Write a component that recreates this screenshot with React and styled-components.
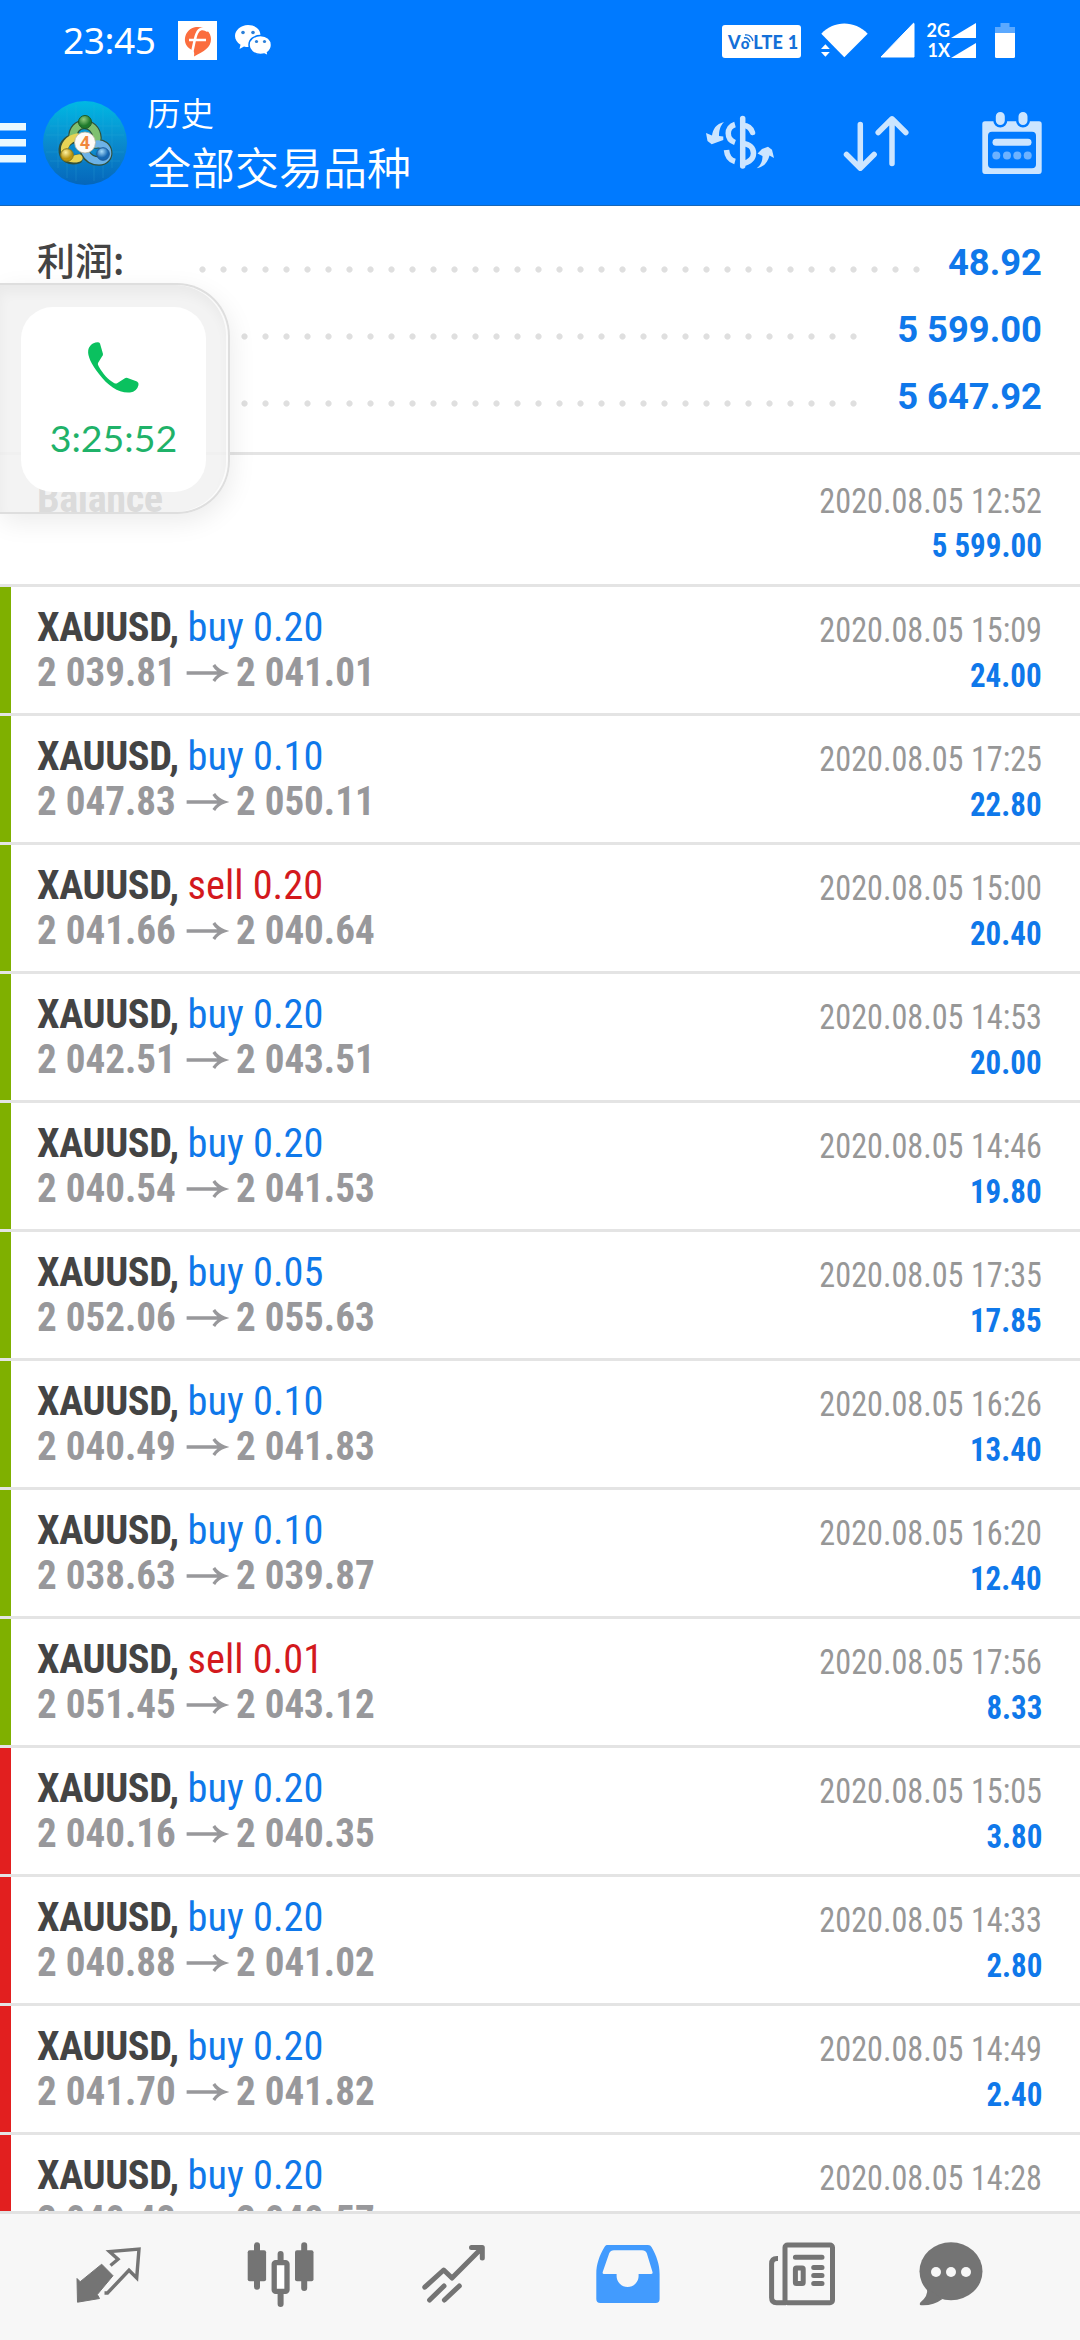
import React from 'react';
import styled, {createGlobalStyle} from 'styled-components';

const CONDENSED = "'Roboto Condensed', Roboto, 'Noto Sans CJK SC', sans-serif";
const CJK = "'Noto Sans CJK SC', sans-serif";

const DEALS = [
    {type: 'buy', volume: '0.20', from: '2 039.81', to: '2 041.01', date: '2020.08.05 15:09', profit: '24.00'},
    {type: 'buy', volume: '0.10', from: '2 047.83', to: '2 050.11', date: '2020.08.05 17:25', profit: '22.80'},
    {type: 'sell', volume: '0.20', from: '2 041.66', to: '2 040.64', date: '2020.08.05 15:00', profit: '20.40'},
    {type: 'buy', volume: '0.20', from: '2 042.51', to: '2 043.51', date: '2020.08.05 14:53', profit: '20.00'},
    {type: 'buy', volume: '0.20', from: '2 040.54', to: '2 041.53', date: '2020.08.05 14:46', profit: '19.80'},
    {type: 'buy', volume: '0.05', from: '2 052.06', to: '2 055.63', date: '2020.08.05 17:35', profit: '17.85'},
    {type: 'buy', volume: '0.10', from: '2 040.49', to: '2 041.83', date: '2020.08.05 16:26', profit: '13.40'},
    {type: 'buy', volume: '0.10', from: '2 038.63', to: '2 039.87', date: '2020.08.05 16:20', profit: '12.40'},
    {type: 'sell', volume: '0.01', from: '2 051.45', to: '2 043.12', date: '2020.08.05 17:56', profit: '8.33'},
    {type: 'buy', volume: '0.20', from: '2 040.16', to: '2 040.35', date: '2020.08.05 15:05', profit: '3.80', closedBy: 'sl'},
    {type: 'buy', volume: '0.20', from: '2 040.88', to: '2 041.02', date: '2020.08.05 14:33', profit: '2.80', closedBy: 'sl'},
    {type: 'buy', volume: '0.20', from: '2 041.70', to: '2 041.82', date: '2020.08.05 14:49', profit: '2.40', closedBy: 'sl'},
    {type: 'buy', volume: '0.20', from: '2 040.48', to: '2 040.57', date: '2020.08.05 14:28', profit: '1.80', closedBy: 'sl'},
];

const GlobalStyle = createGlobalStyle`
    body {
        margin: 0;
        background: #fff;
    }

    svg {
        display: block;
        flex: none;
        overflow: visible;
    }
`;

const Screen = styled.div`
    position: relative;
    display: flex;
    flex-direction: column;
    width: 1080px;
    height: 2340px;
    overflow: hidden;
    background: #fff;
    font-family: ${CONDENSED};
`;

const Header = styled.header`
    flex: none;
    box-sizing: border-box;
    height: 206px;
    border-bottom: 1px solid #1767b8;
    background: #007aff;
    color: #fff;
`;

const StatusBar = styled.div`
    display: flex;
    align-items: center;
    height: 80px;
    padding: 0 65px 0 63px;

    svg + svg {
        margin-left: 18px;
    }
`;

const Clock = styled.span`
    width: 115px;
    font: 400 37px/80px 'Noto Sans', sans-serif;
    letter-spacing: -0.4px;
`;

const StatusIcons = styled.div`
    display: flex;
    align-items: center;
    margin-left: auto;

    svg + svg {
        margin-left: 12px;
    }
`;

const Volte = styled.div`
    position: relative;
    display: flex;
    align-items: baseline;
    box-sizing: border-box;
    width: 79px;
    height: 33px;
    margin: 3px 20px 0 0;
    padding-left: 6px;
    border-radius: 3px;
    background: #fff;
    color: #1470d8;
    font: 900 18px/34px Lato, sans-serif;

    svg {
        position: absolute;
        top: 9px;
        left: 22px;
    }
`;

const VolteO = styled.span`
    font-size: 15px;
`;

const VolteText = styled.span`
    margin-left: 4px;
    letter-spacing: 0.3px;
    white-space: pre;
`;

const Networks = styled.div`
    display: grid;
    grid-template-columns: 26px 25px;
    row-gap: 5px;
    align-items: center;
    margin: 0 19px 0 10px;
    font: 700 18px/15px Lato, sans-serif;
`;

const NetworkName = styled.span`
    text-align: right;
    padding-right: 1px;
    line-height: 15px;
`;

const Toolbar = styled.div`
    display: flex;
    align-items: center;
    height: 125px;
    padding-right: 32px;

    svg + svg {
        margin-left: 16px;
    }
`;

const Titles = styled.div`
    flex: 1;
    padding: 0 0 4px 19px;
    font-family: ${CJK};
    font-weight: 350;
`;

const Caption = styled.div`
    font-size: 33.5px;
    line-height: 50px;
`;

const Title = styled.div`
    font-size: 44px;
    line-height: 58px;
`;

const Actions = styled.div`
    display: flex;

    svg + svg {
        margin-left: 64px;
    }
`;

const Summary = styled.section`
    flex: none;
    box-sizing: border-box;
    height: 249px;
    padding: 23px 38px 0 37px;
    border-bottom: 3px solid #e4e4e4;
`;

const SummaryRow = styled.div`
    display: flex;
    align-items: center;
    height: 67px;
`;

const SummaryLabel = styled.span`
    width: ${({$width}) => $width}px;
    padding-bottom: 7px;
    color: #444;
    font: 500 38px/60px ${CJK};
`;

const Dots = styled.span`
    width: ${({$count}) => $count * 21}px;
    height: 7px;
    margin-top: 14px;
    background: radial-gradient(circle, #dfdfdf 2.6px, transparent 3.6px) 0 0 / 21px 7px repeat-x;
`;

const SummaryValue = styled.span`
    margin-left: auto;
    color: #0f78ea;
    font: 700 36.4px/67px Roboto, sans-serif;
`;

const List = styled.main`
    flex: 1;
    min-height: 0;
    overflow: hidden;
`;

const Row = styled.div`
    display: flex;
    height: 126px;
    border-bottom: 3px solid #e4e4e4;
`;

const BalanceRow = styled(Row)`
    box-sizing: border-box;
    height: 132px;
    padding-top: 3px;
`;

const Mark = styled.i`
    width: 11px;
    background: ${({$type}) => ($type === 'sl' ? '#e21f1f' : $type ? '#7fb000' : 'transparent')};
`;

const RowBody = styled.div`
    flex: 1;
    padding: 18px 38px 0 26px;
`;

const Line = styled.div`
    display: flex;
    justify-content: space-between;
    align-items: baseline;
    height: 45px;
    font-size: 41px;
    line-height: 45px;
    white-space: pre;
`;

const TotalLine = styled(Line)`
    justify-content: flex-end;
    padding-top: 1px;
`;

const Instrument = styled.span`
    transform: scaleX(0.984);
    transform-origin: left;
`;

const Symbol = styled.b`
    color: #444;
    letter-spacing: -0.4px;
`;

const Operation = styled.span`
    color: ${({$type}) => ($type === 'sell' ? '#d3191d' : '#0f78ea')};
`;

const Prices = styled.b`
    display: flex;
    align-items: center;
    gap: 11px;
    color: #98989b;
    transform: scaleX(0.953);
    transform-origin: left;
`;

const DealDate = styled.span`
    padding-top: 1px;
    color: #979797;
    font-size: 35px;
    transform: translateY(1px) scaleX(0.92);
    transform-origin: right;
`;

const Profit = styled.b`
    color: #0f78ea;
    font-size: 34px;
    transform: translateY(1px) scaleX(0.912);
    transform-origin: right;
`;

const TabBar = styled.nav`
    flex: none;
    display: flex;
    box-sizing: border-box;
    height: 129px;
    padding: 0 0 6px 21px;
    border-top: 3px solid #e2e2e2;
    background: #f7f7f7;
`;

const Tab = styled.div`
    display: flex;
    align-items: center;
    justify-content: center;
    width: ${({$last}) => ($last ? 130 : 173)}px;
    color: ${({$active}) => ($active ? '#429bfe' : '#747474')};
`;

const CallBubble = styled.aside`
    position: absolute;
    top: 283px;
    left: 0;
    box-sizing: border-box;
    width: 230px;
    height: 231px;
    padding: 22px 0 0 21px;
    border: 2px solid #dedede;
    border-left: 0;
    border-radius: 0 53px 53px 0;
    background: rgba(241, 241, 241, 0.87);
    background-clip: padding-box;
    box-shadow: 2px 8px 26px rgba(0, 0, 0, 0.08), inset -2px 0 0 rgba(255, 255, 255, 0.7),
        inset 0 8px 12px rgba(0, 0, 0, 0.04);
`;

const CallCard = styled.div`
    display: flex;
    flex-direction: column;
    align-items: center;
    box-sizing: border-box;
    width: 185px;
    height: 185px;
    padding-top: 35px;
    border-radius: 32px;
    background: #fff;
    color: #0ac15f;
`;

const CallTime = styled.span`
    margin-top: 19px;
    color: #1fb269;
    font: 400 37.5px/52px Lato, sans-serif;
`;

const Stroke = ({width = 5, children}) => (
    <g fill="none" stroke="currentColor" strokeWidth={width} strokeLinecap="round" strokeLinejoin="round">
        {children}
    </g>
);

const BrokerIcon = () => (
    <svg width="39" height="39" viewBox="0 0 39 39">
        <path d="M0 0h39v39H0z" fill="#fff" />
        <path d="M16 35.500c.5-4 .5-5-3-7C3 23 6 8 18 6c9-1 15 5 15 12 0 9-7 12-17 17.500z" fill="#fb6d3e" />
        <path d="M14 32c2-9 3-16 5-20 2-4.500 6-5.500 11-2M11 19h17" fill="none" stroke="#fff" strokeWidth="2.6" />
    </svg>
);

const WechatIcon = () => (
    <svg width="37" height="31" viewBox="0 0 37 31">
        <path d="M13 0c7 0 12.500 4 12.500 10.500S20 22 13 22c-1.500 0-2.500-.2-4-.6L4.500 24l1-4.300C2 17.500 0 14.500 0 11 0 5 6 0 13 0z" fill="#fff" />
        <path d="M25.500 10.500c6.500 0 11 4 11 9.500 0 3-1.400 5.500-4 7.500l.8 3.500-4-2c-1.200.4-2.300.5-3.800.5-6.500 0-11.500-4-11.500-9.500s5-9.500 11.500-9.500z" fill="#fff" stroke="#007aff" strokeWidth="1.500" />
        <g fill="#2b7fd8">
            <circle cx="8" cy="7.500" r="1.800" />
            <circle cx="18" cy="7.500" r="1.800" />
            <circle cx="21.500" cy="16.500" r="1.600" />
            <circle cx="29.500" cy="16.500" r="1.600" />
        </g>
    </svg>
);

const WifiIcon = () => (
    <svg width="47" height="36" viewBox="0 0 47 36">
        <path d="M.3 11.700C13-2 33.500-2 46.700 11.700L23.300 35.300z" fill="#fff" />
        <path d="M0 27l4.400-4.700L8.800 27zM0 30h8.800l-4.400 4.700z" fill="#fff" />
    </svg>
);

const SignalIcon = () => (
    <svg width="35" height="36" viewBox="0 0 35 36">
        <path d="M33.500 1.200 1 35h33V1.500z" fill="#fff" stroke="#fff" strokeLinejoin="round" />
    </svg>
);

const SmallSignal = () => (
    <svg width="25" height="15" viewBox="0 0 25 15">
        <path d="M25 0v15H0z" fill="#fff" />
    </svg>
);

const BatteryIcon = () => (
    <svg width="20" height="35" viewBox="0 0 20 35">
        <path d="M5.500 0h9v4H20v8H0V4h5.500z" fill="#5ba9ff" />
        <path d="M0 10h20v23.500q0 1.500-1.500 1.500h-17Q0 35 0 33.500z" fill="#fff" />
    </svg>
);

const MenuIcon = () => (
    <svg width="26" height="40" viewBox="0 0 26 40">
        <path d="M0 0h26v7.500H0zM0 16h26v7.500H0zM0 32h26v7.500H0z" fill="#e9f8ff" />
    </svg>
);

const AppLogo = () => (
    <svg width="86" height="86" viewBox="0 0 86 86">
        <defs>
            <linearGradient id="sky" x1="0" y1="0" x2="0" y2="1">
                <stop offset="0" stopColor="#00b9e4" />
                <stop offset="0.5" stopColor="#0a8bcd" />
                <stop offset="1" stopColor="#0566bb" />
            </linearGradient>
            <radialGradient id="green" cx="0.4" cy="0.3">
                <stop offset="0" stopColor="#8fcb7c" />
                <stop offset="1" stopColor="#1f7a2c" />
            </radialGradient>
            <radialGradient id="yellow" cx="0.4" cy="0.3">
                <stop offset="0" stopColor="#fff2a0" />
                <stop offset="1" stopColor="#b99410" />
            </radialGradient>
            <radialGradient id="blue" cx="0.4" cy="0.3">
                <stop offset="0" stopColor="#a8dcfa" />
                <stop offset="1" stopColor="#1668b4" />
            </radialGradient>
        </defs>
        <circle cx="43" cy="43" r="42" fill="url(#sky)" />
        <path d="M16 18v50M25 8v70M34 5v76M52 5v76M61 8v70M70 18v50M8 26h70M4 35h78M4 52h78M8 61h70" stroke="#3bb5dd" strokeWidth="0.700" opacity="0.300" />
        <g fill="none" strokeLinecap="round">
            <path d="M31 38c-1-18 23-18 24 0M54 44c14-2 16 17 3 17-7 0-11-3-14-8M33 38c-18 4-14 26 3 21" stroke="#31503a" strokeWidth="9.500" />
            <path d="M31 38c-1-18 23-18 24 0l-1 6" stroke="#7fc06f" strokeWidth="7.200" />
            <path d="M54 44c14-2 16 17 3 17-7 0-11-3-14-9" stroke="#6db2e6" strokeWidth="7.200" />
            <path d="M35 37c-18 3-16 27 2 21" stroke="#e6d355" strokeWidth="7.200" />
        </g>
        <circle cx="43" cy="22" r="6.500" fill="url(#green)" stroke="#1b5926" />
        <circle cx="25" cy="55" r="6.300" fill="url(#yellow)" stroke="#8a7a1a" />
        <circle cx="61" cy="54" r="6.300" fill="url(#blue)" stroke="#1d5c9c" />
        <circle cx="43" cy="42.500" r="10.500" fill="#fdfbf7" stroke="#b7b39b" strokeWidth="0.800" />
        <text x="43" y="48.800" textAnchor="middle" fontFamily="Roboto" fontWeight="700" fontSize="18" fill="#f0873c">4</text>
    </svg>
);

const CurrencyIcon = () => (
    <svg width="72" height="72" viewBox="0 0 72 72" color="#cce5ff">
        <path d="M20 15C12 17 9 22 8 28.500L2 26l1.500 8 4.200 3.300L19.300 33v-3.500L15 29c0-5 1-10 5-14z" fill="currentColor" />
        <path d="M52.700 61.300C57 58 58.500 54 58.500 49l-5-2.500L58 42l6-2.300 4 3L70 51l-4.500-2.500C64 55 60 60 52.700 61.300z" fill="currentColor" />
        <g fill="none" stroke="currentColor" strokeWidth="5.500">
            <path d="M38.700 11.500v47.500" strokeLinecap="round" />
            <path d="M39 18.500c4.500 0 8 2.500 9.500 7" strokeLinecap="round" />
            <path d="M39 36.500c14 1 14 18 0 20" />
            <path d="M31 17.500c-9 2.500-9 15 0 18M22.500 43c.5 6 3 10 8.500 11.500" />
        </g>
    </svg>
);

const SortIcon = () => (
    <svg width="72" height="72" viewBox="0 0 72 72" color="#cce5ff">
        <Stroke width={5.5}>
            <path d="M20.300 17.500V61M6.500 47.500 20.300 61.200 34.100 47.500M52 56.500V12M38.200 25.500 52 11.800 65.800 25.500" />
        </Stroke>
    </svg>
);

const CalendarIcon = () => (
    <svg width="72" height="72" viewBox="0 0 72 72" color="#cce5ff">
        <path fillRule="evenodd" d="M9 14.300h54q2.700 0 2.700 2.700v47q0 3-2.700 3H9q-2.700 0-2.700-3V17q0-2.700 2.700-2.700zM16 24.700q-4 0-4 4v28.600q0 4 4 4h40q4 0 4-4V28.700q0-4-4-4z" fill="currentColor" />
        <path d="M24.300 9.500v4M47 9.500v4" stroke="#007aff" strokeWidth="14" strokeLinecap="round" />
        <path d="M24.300 9.500v4M47 9.500v4" stroke="currentColor" strokeWidth="9" strokeLinecap="round" />
        <path d="M20 35.300h32" stroke="currentColor" strokeWidth="7" strokeLinecap="round" />
        <g fill="#6db2ff">
            <circle cx="20.300" cy="48.500" r="4" />
            <circle cx="31" cy="48.500" r="4" />
            <circle cx="41.300" cy="48.500" r="4" />
            <circle cx="51.700" cy="48.500" r="4" />
        </g>
    </svg>
);

const PhoneIcon = () => (
    <svg width="51" height="51" viewBox="0 0 51 51">
        <path d="M7.500.6Q11-.5 12 1.500L15 12q0 1.500-1 2.500l-4 6.500q-.5 1 .5 3C15 32 20 37.500 26 41q2 1 3.500 0l7-4.500q1.500-1 3-.5l9.500 3.500q2 1 1.500 3.500-1.500 6.500-8.500 7.500C31 51.500 20 44 11 32 3 21.500-.5 14 .2 8.500.8 4.500 4 1.500 7.500.6z" fill="currentColor" />
    </svg>
);

const ArrowIcon = () => (
    <svg width="41" height="18" viewBox="0 0 41 18">
        <path d="M0 9h38M28.500 1Q32 6.500 39.500 9q-7.500 2.500-11 8" fill="none" stroke="currentColor" strokeWidth="3.400" />
    </svg>
);

const QuotesIcon = () => (
    <svg width="72" height="72" viewBox="0 0 72 72">
        <path d="M5 40.500 8.200 43.700 29.700 26.200 41 37.700 25.300 56.500 27.500 60.500 5.500 64.200z" fill="currentColor" stroke="currentColor" strokeLinejoin="round" />
        <path d="M38.500 27.500 46 21.300 37.500 13.500 67 11 64.700 40 57 32.300 35.500 55H32.500" fill="none" stroke="currentColor" strokeWidth="3.400" />
    </svg>
);

const ChartIcon = () => (
    <svg width="72" height="72" viewBox="0 0 72 72">
        <Stroke width={6}>
            <path d="M12 7.300v41.400M59.200 7.300v42.700M35.600 16v8M35.600 54v12" />
        </Stroke>
        <rect x="2.700" y="12.300" width="18.400" height="31" rx="2" fill="currentColor" />
        <rect x="50" y="12.300" width="18.500" height="31" rx="2" fill="currentColor" />
        <rect x="29.200" y="24.600" width="12.800" height="28.800" rx="1.500" fill="#fff" stroke="currentColor" strokeWidth="5.300" />
    </svg>
);

const TradeIcon = () => (
    <svg width="72" height="72" viewBox="0 0 72 72">
        <Stroke>
            <path d="M6.800 49.200 25.700 32 34 40 63.900 10M53.500 9.500H64.300V20M11.600 62 26 48M26.400 62 41.300 48" />
        </Stroke>
    </svg>
);

const HistoryIcon = () => (
    <svg width="72" height="72" viewBox="0 0 72 72">
        <path fillRule="evenodd" d="M17 7h40q2.500 0 3.500 2c5 9 8.100 17 8.100 27v25q0 4-4 4H9.300q-4 0-4-4V36c0-10 3-18 8.200-27 1-1.700 2-2 3.500-2zM23 12.300q-3.500 0-4.800 3L11.700 34q-.5 2 1.300 2h12.600v2a11 11 0 0 0 22 0v-2H60q2 0 1.500-2L55.800 15.300q-1.200-3-4.800-3z" fill="currentColor" />
    </svg>
);

const NewsIcon = () => (
    <svg width="72" height="72" viewBox="0 0 72 72">
        <Stroke>
            <rect x="21" y="7" width="47.500" height="57.800" rx="2.500" />
            <path d="M31.400 19.200H58M49.700 29.500H58M49.700 37.500H58M49.700 45.500H58" />
            <rect x="31.400" y="30" width="7.800" height="15.500" rx="1" />
        </Stroke>
        <path d="M14 20.500h-1q-5.400 0-5.400 5.500v33.500q0 5.300 5 5.300H22" fill="none" stroke="currentColor" strokeWidth="5" />
    </svg>
);

const ChatIcon = () => (
    <svg width="72" height="72" viewBox="0 0 72 72">
        <ellipse cx="36" cy="33.300" rx="31.500" ry="29" fill="currentColor" />
        <path d="M12 50q1.500 8-6.700 14.500Q4 67 6 67.300 18 68 27.500 61z" fill="currentColor" />
        <g fill="#f7f7f7">
            <circle cx="21" cy="34" r="5" />
            <circle cx="36" cy="34" r="5" />
            <circle cx="51" cy="34" r="5" />
        </g>
    </svg>
);

const TABS = [QuotesIcon, ChartIcon, TradeIcon, HistoryIcon, NewsIcon, ChatIcon];

const Deal = ({type, volume, from, to, date, profit, closedBy = 'tp'}) => (
    <Row>
        <Mark $type={closedBy} />
        <RowBody>
            <Line>
                <Instrument>
                    <Symbol>XAUUSD, </Symbol>
                    <Operation $type={type}>
                        {type} {volume}
                    </Operation>
                </Instrument>
                <DealDate>{date}</DealDate>
            </Line>
            <Line>
                <Prices>
                    {from}
                    <ArrowIcon />
                    {to}
                </Prices>
                <Profit>{profit}</Profit>
            </Line>
        </RowBody>
    </Row>
);

export default function App() {
    return (
        <Screen>
            <GlobalStyle />
            <Header>
                <StatusBar>
                    <Clock>23:45</Clock>
                    <BrokerIcon />
                    <WechatIcon />
                    <StatusIcons>
                        <Volte>
                            V<VolteO>o</VolteO>
                            <VolteText>LTE 1</VolteText>
                            <svg width="10" height="10" viewBox="0 0 10 10">
                                <path d="M0 4q4-1 6 4M1 1q6-1 8 6" fill="none" stroke="currentColor" strokeWidth="1.400" />
                            </svg>
                        </Volte>
                        <WifiIcon />
                        <SignalIcon />
                        <Networks>
                            <NetworkName>2G</NetworkName>
                            <SmallSignal />
                            <NetworkName>1X</NetworkName>
                            <SmallSignal />
                        </Networks>
                        <BatteryIcon />
                    </StatusIcons>
                </StatusBar>
                <Toolbar>
                    <MenuIcon />
                    <AppLogo />
                    <Titles>
                        <Caption>历史</Caption>
                        <Title>全部交易品种</Title>
                    </Titles>
                    <Actions>
                        <CurrencyIcon />
                        <SortIcon />
                        <CalendarIcon />
                    </Actions>
                </Toolbar>
            </Header>
            <Summary>
                <SummaryRow>
                    <SummaryLabel $width={155}>利润:</SummaryLabel>
                    <Dots $count={35} />
                    <SummaryValue>48.92</SummaryValue>
                </SummaryRow>
                <SummaryRow>
                    <SummaryLabel $width={197} />
                    <Dots $count={30} />
                    <SummaryValue>5 599.00</SummaryValue>
                </SummaryRow>
                <SummaryRow>
                    <SummaryLabel $width={197} />
                    <Dots $count={30} />
                    <SummaryValue>5 647.92</SummaryValue>
                </SummaryRow>
            </Summary>
            <List>
                <BalanceRow>
                    <Mark />
                    <RowBody>
                        <Line>
                            <Instrument>
                                <Symbol>Balance</Symbol>
                            </Instrument>
                            <DealDate>2020.08.05 12:52</DealDate>
                        </Line>
                        <TotalLine>
                            <Profit>5 599.00</Profit>
                        </TotalLine>
                    </RowBody>
                </BalanceRow>
                {DEALS.map((deal) => (
                    <Deal key={deal.date} {...deal} />
                ))}
            </List>
            <TabBar>
                {TABS.map((Icon, i) => (
                    <Tab key={i} $active={Icon === HistoryIcon} $last={i === TABS.length - 1}>
                        <Icon />
                    </Tab>
                ))}
            </TabBar>
            <CallBubble>
                <CallCard>
                    <PhoneIcon />
                    <CallTime>3:25:52</CallTime>
                </CallCard>
            </CallBubble>
        </Screen>
    );
}
